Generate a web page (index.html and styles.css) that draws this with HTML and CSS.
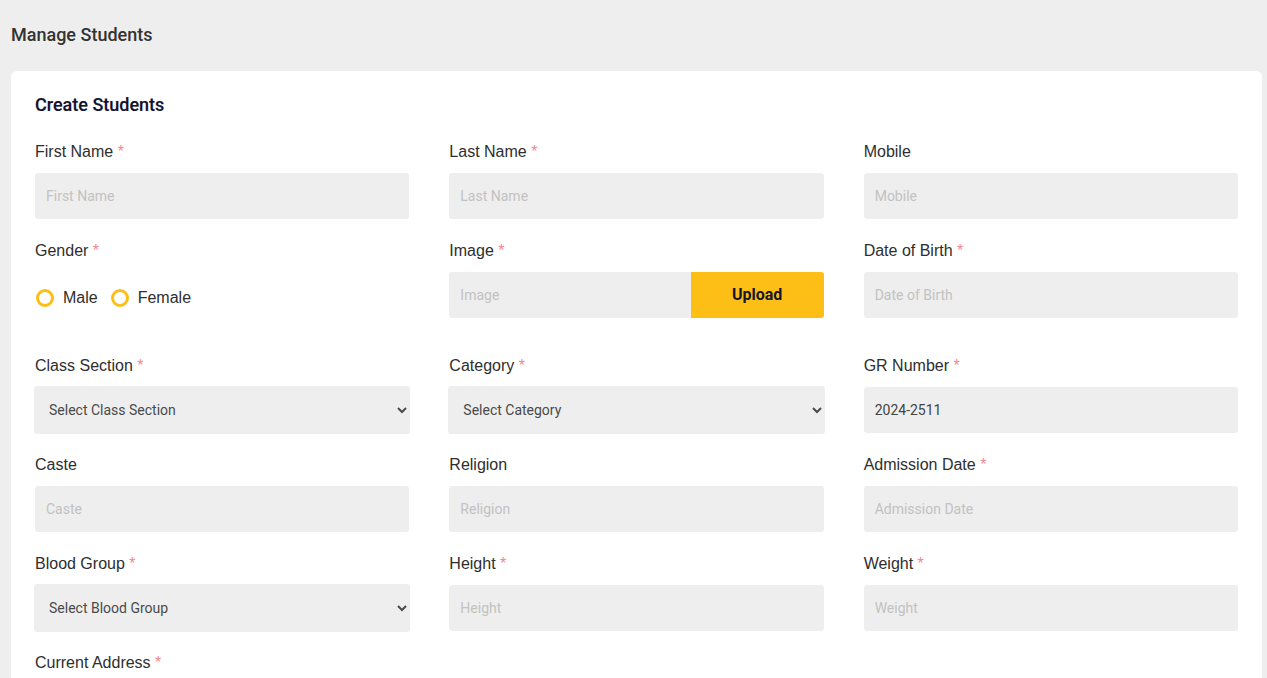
FILE: index.html
```html
<!DOCTYPE html>
<html lang="en">
<head>
<meta charset="utf-8">
<title>Manage Students</title>
<link rel="stylesheet" href="styles.css">
</head>
<body>
<div class="page">
  <h1 class="page-title">Manage Students</h1>
  <div class="card">
    <h2 class="card-title">Create Students</h2>
    <form class="form-grid">
      <div class="field">
        <label class="label">First Name <span class="req">*</span></label>
        <input class="input" type="text" placeholder="First Name">
      </div>
      <div class="field">
        <label class="label">Last Name <span class="req">*</span></label>
        <input class="input" type="text" placeholder="Last Name">
      </div>
      <div class="field">
        <label class="label">Mobile</label>
        <input class="input" type="text" placeholder="Mobile">
      </div>

      <div class="field">
        <label class="label">Gender <span class="req">*</span></label>
        <div class="radio-group">
          <label class="radio"><span class="radio-circle"></span>Male</label>
          <label class="radio"><span class="radio-circle"></span>Female</label>
        </div>
      </div>
      <div class="field">
        <label class="label">Image <span class="req">*</span></label>
        <div class="upload">
          <input class="input upload-input" type="text" placeholder="Image">
          <button type="button" class="upload-btn">Upload</button>
        </div>
      </div>
      <div class="field">
        <label class="label">Date of Birth <span class="req">*</span></label>
        <input class="input" type="text" placeholder="Date of Birth">
      </div>

      <div class="field">
        <label class="label">Class Section <span class="req">*</span></label>
        <select class="select"><option>Select Class Section</option></select>
      </div>
      <div class="field">
        <label class="label">Category <span class="req">*</span></label>
        <select class="select"><option>Select Category</option></select>
      </div>
      <div class="field">
        <label class="label">GR Number <span class="req">*</span></label>
        <input class="input filled" type="text" value="2024-2511">
      </div>

      <div class="field">
        <label class="label">Caste</label>
        <input class="input" type="text" placeholder="Caste">
      </div>
      <div class="field">
        <label class="label">Religion</label>
        <input class="input" type="text" placeholder="Religion">
      </div>
      <div class="field">
        <label class="label">Admission Date <span class="req">*</span></label>
        <input class="input" type="text" placeholder="Admission Date">
      </div>

      <div class="field">
        <label class="label">Blood Group <span class="req">*</span></label>
        <select class="select"><option>Select Blood Group</option></select>
      </div>
      <div class="field">
        <label class="label">Height <span class="req">*</span></label>
        <input class="input" type="text" placeholder="Height">
      </div>
      <div class="field">
        <label class="label">Weight <span class="req">*</span></label>
        <input class="input" type="text" placeholder="Weight">
      </div>

      <div class="field">
        <label class="label">Current Address <span class="req">*</span></label>
      </div>
    </form>
  </div>
</div>
</body>
</html>
```

FILE: styles.css
```css
html, body {
  margin: 0;
  padding: 0;
  background: #eeeeee;
  overflow: hidden;
}
.page {
  padding: 25px 5px 0 11px;
}
.page-title {
  margin: 0 0 26px;
  font-family: Roboto, "Liberation Sans", sans-serif;
  font-weight: 500;
  font-size: 18px;
  line-height: 20px;
  color: #333333;
}
.card {
  background: #ffffff;
  border-radius: 6px;
  padding: 24px 24px 0;
  min-height: 700px;
}
.card-title {
  margin: 0 0 27px;
  font-family: Roboto, "Liberation Sans", sans-serif;
  font-weight: 500;
  font-size: 18px;
  line-height: 20px;
  color: #111130;
  -webkit-text-stroke: 0.15px #111130;
}
.form-grid {
  display: grid;
  grid-template-columns: repeat(3, 1fr);
  column-gap: 40px;
}
.field {
  display: flex;
  flex-direction: column;
  padding-bottom: 22px;
}
.label {
  font-family: "Liberation Sans", Arial, sans-serif;
  font-size: 16px;
  line-height: 18px;
  color: #2e2e2e;
  padding-top: 1px;
  margin-bottom: 12px;
}
.req {
  color: #f4868f;
}
.input {
  box-sizing: border-box;
  height: 46px;
  width: 100%;
  border: none;
  border-radius: 3px;
  background: #eeeeee;
  padding: 0 11px;
  font-family: Roboto, "Liberation Sans", sans-serif;
  font-size: 14px;
  color: #444444;
  outline: none;
}
.input::placeholder {
  color: #c2c2c2;
}
.filled {
  color: #444444;
}
.select {
  box-sizing: border-box;
  height: 48px;
  margin: -1px -1px -1px;
  border: none;
  border-radius: 3px;
  background-color: #eeeeee;
  padding: 0 3px 1px 11px;
  font-family: Roboto, "Liberation Sans", sans-serif;
  font-size: 14px;
  color: #4a4a4a;
  outline: none;
}
.radio-group {
  height: 62px;
  box-sizing: border-box;
  padding-top: 17px;
  display: flex;
  align-items: flex-start;
  gap: 12px;
}
.radio {
  display: flex;
  align-items: center;
  gap: 9px;
  font-family: "Liberation Sans", Arial, sans-serif;
  font-size: 16px;
  line-height: 18px;
  color: #2e2e2e;
}
.radio-circle {
  box-sizing: border-box;
  width: 18px;
  height: 18px;
  border: 3px solid #fbbf17;
  border-radius: 50%;
  margin-left: 1px;
}
.upload {
  display: flex;
  height: 46px;
}
.upload-input {
  flex: 1;
  border-radius: 3px 0 0 3px;
}
.upload-btn {
  width: 133px;
  border: none;
  border-radius: 0 3px 3px 0;
  background: #fdbf16;
  font-family: Roboto, "Liberation Sans", sans-serif;
  font-weight: 700;
  font-size: 16px;
  color: #15152b;
  padding: 0 0 2px;
}
```
